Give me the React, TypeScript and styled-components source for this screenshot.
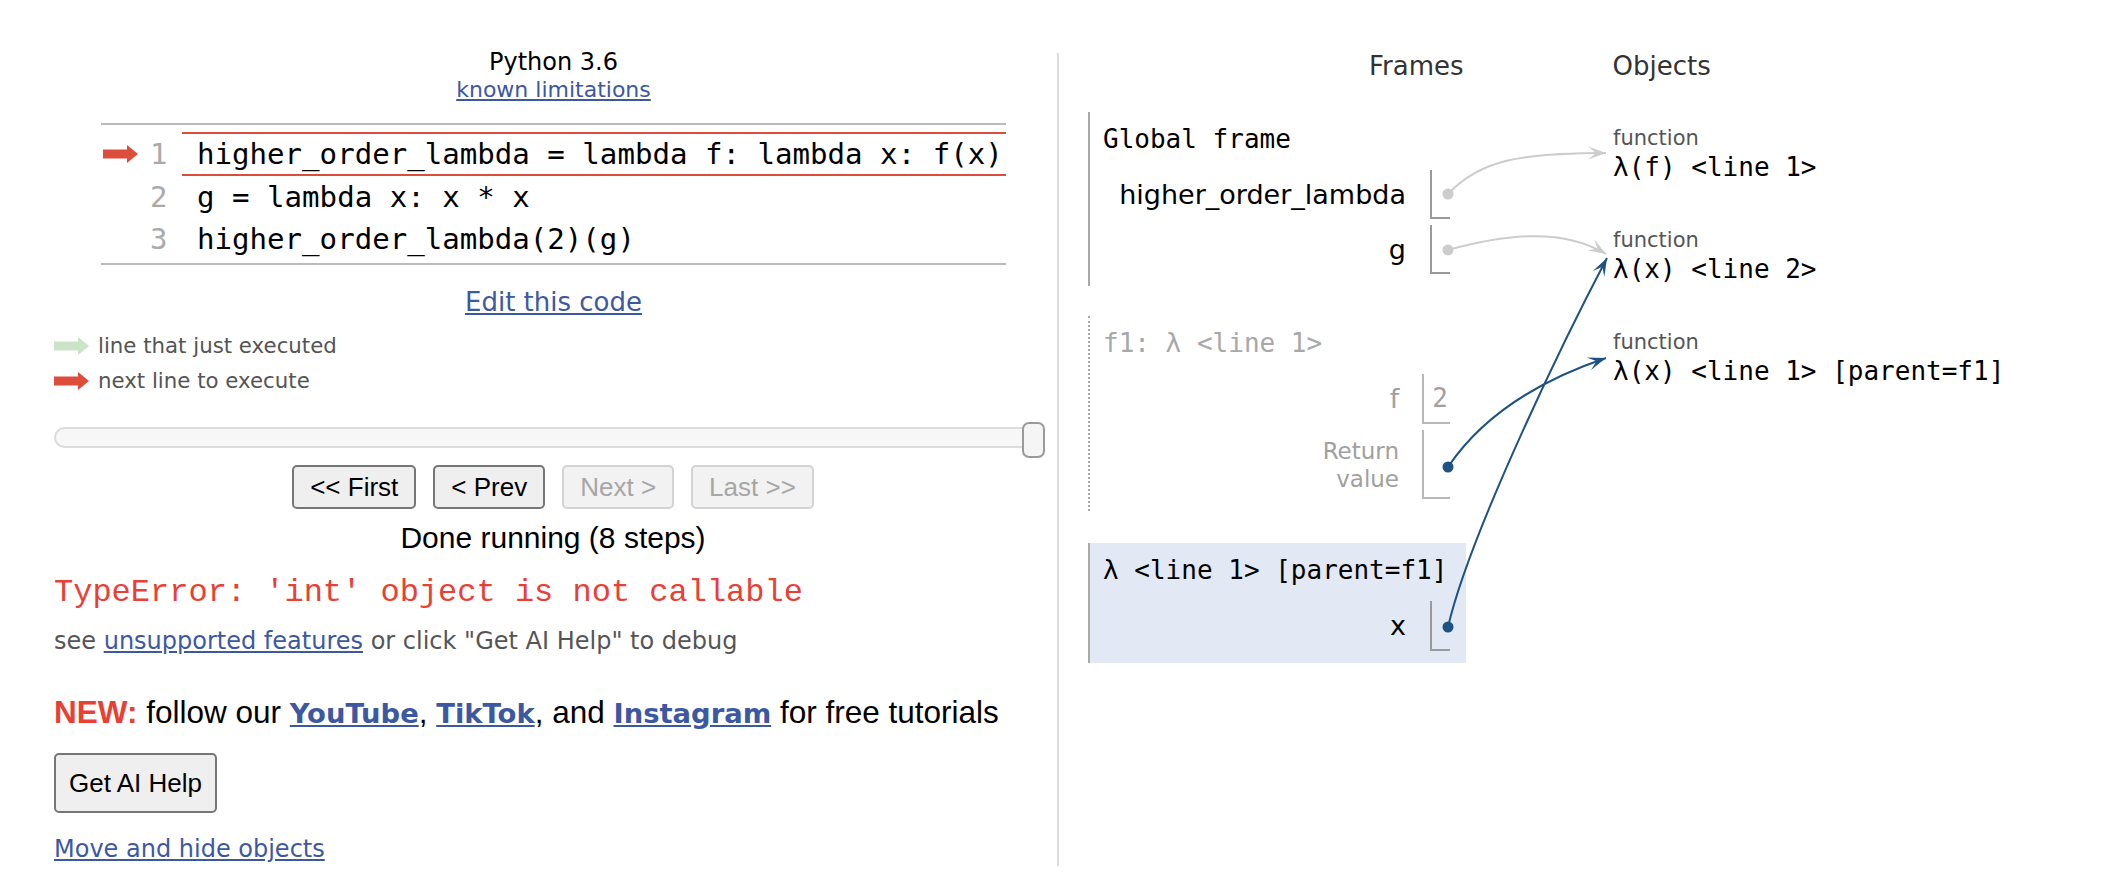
import React from "react";
import styled, { createGlobalStyle, css } from "styled-components";

const SANS = `"DejaVu Sans", Verdana, sans-serif`;
const ARIAL = `"Liberation Sans", Arial, Helvetica, sans-serif`;
const MONO = `"DejaVu Sans Mono", Menlo, monospace`;
const COURIER = `"Liberation Mono", "Courier New", monospace`;
const LINK = "#3d58a2";
const RED = "#dc4d3c";
const ERR = "#e93f34";

const GlobalStyle = createGlobalStyle`
  html, body { margin: 0; padding: 0; background: #ffffff; }
  body { font-family: ${SANS}; color: #000; }
  * { box-sizing: border-box; }
`;

const Page = styled.div`
  position: relative;
  display: flex;
  align-items: flex-start;
  width: 2108px;
  height: 884px;
  overflow: hidden;
`;

/* ---------- left pane ---------- */
const LeftPane = styled.div`
  flex: none;
  width: 1057px;
  padding: 48px 10px 0 54px;
  display: flex;
  flex-direction: column;
  align-items: flex-start;
`;

const CodeColumn = styled.div`
  margin-left: 47px;
  width: 905px;
  display: flex;
  flex-direction: column;
  align-items: center;
`;

const LangLabel = styled.div`
  font-family: ${SANS};
  font-size: 24px;
  line-height: 28px;
  color: #000;
`;

const TopLink = styled.a`
  font-family: ${SANS};
  font-size: 22px;
  line-height: 28px;
  color: ${LINK};
  text-decoration: underline;
`;

const CodeTable = styled.div`
  width: 100%;
  margin-top: 19px;
  border-top: 2px solid #bbbbbb;
  border-bottom: 2px solid #bbbbbb;
  padding: 7px 0 3px;
  display: flex;
  flex-direction: column;
`;

const CodeRow = styled.div`
  display: flex;
  align-items: center;
`;

const Gutter = styled.div`
  width: 44px;
  flex: none;
  display: flex;
  align-items: center;
  padding-left: 2px;
  height: 18px;
`;

const LineNo = styled.div<{ $current?: boolean }>`
  width: 37px;
  flex: none;
  padding-left: 5px;
  font-family: ${MONO};
  font-size: 29px;
  line-height: ${(p) => (p.$current ? 40 : 42)}px;
  color: #aaaaaa;
`;

const CodeCell = styled.div<{ $current?: boolean }>`
  flex: 1;
  padding-left: 15px;
  font-family: ${MONO};
  font-size: 29.1px;
  line-height: 42px;
  white-space: pre;
  color: #000;
  ${(p) =>
    p.$current &&
    css`
      line-height: 40px;
      border-top: 2px solid ${RED};
      border-bottom: 2px solid ${RED};
    `}
`;

const EditLink = styled.a`
  margin-top: 21px;
  font-family: ${SANS};
  font-size: 26px;
  line-height: 32px;
  color: ${LINK};
  text-decoration: underline;
`;

const Legend = styled.div`
  margin-top: 10px;
  display: flex;
  flex-direction: column;
`;

const LegendRow = styled.div`
  display: flex;
  align-items: center;
  gap: 8px;
  height: 35px;
  font-family: ${SANS};
  font-size: 21.3px;
  color: #555555;
`;

const Slider = styled.div`
  position: relative;
  width: 991px;
  height: 36px;
  margin-top: 24px;
`;

const Track = styled.div`
  margin-top: 5px;
  width: 984px;
  height: 21px;
  border: 2px solid #dcdcdc;
  border-radius: 11px;
  background: #f7f7f7;
`;

const Handle = styled.div`
  position: absolute;
  right: 0;
  top: 0;
  width: 23px;
  height: 36px;
  border: 2px solid #9a9a9a;
  border-radius: 7px;
  background: #f5f5f5;
`;

const NavRow = styled.div`
  align-self: stretch;
  display: flex;
  justify-content: center;
  gap: 17px;
  margin-top: 7px;
  padding-left: 5px;
`;

const NavButton = styled.button`
  font-family: ${ARIAL};
  font-size: 26px;
  line-height: 30px;
  padding: 5px 16px;
  border: 2px solid #767676;
  border-radius: 5px;
  background: #efefef;
  color: #000;
  &:disabled {
    border-color: #d3d3d3;
    background: #f2f2f2;
    color: #a6a6a6;
  }
`;

const StatusText = styled.div`
  align-self: stretch;
  text-align: center;
  padding-left: 5px;
  margin-top: 12px;
  font-family: ${ARIAL};
  font-size: 30px;
  line-height: 34px;
  color: #000;
`;

const ErrorText = styled.div`
  margin-top: 20px;
  font-family: ${COURIER};
  font-size: 32px;
  line-height: 36px;
  color: ${ERR};
  white-space: pre;
`;

const HintText = styled.div`
  margin-top: 15px;
  font-family: ${SANS};
  font-size: 24px;
  line-height: 30px;
  color: #555555;
  a {
    color: ${LINK};
    text-decoration: underline;
  }
`;

const NewsText = styled.div`
  margin-top: 38px;
  font-family: ${ARIAL};
  font-size: 31.5px;
  line-height: 36px;
  color: #000;
  white-space: nowrap;
`;

const NewTag = styled.span`
  color: ${ERR};
  font-weight: bold;
`;

const SocialLink = styled.a`
  font-family: ${SANS};
  font-size: 27.4px;
  font-weight: bold;
  color: ${LINK};
  text-decoration: underline;
`;

const HelpButton = styled.button`
  margin-top: 21px;
  font-family: ${ARIAL};
  font-size: 26px;
  line-height: 30px;
  padding: 13px 13px;
  border: 2px solid #767676;
  border-radius: 5px;
  background: #efefef;
  color: #000;
`;

const MoveLink = styled.a`
  margin-top: 21px;
  font-family: ${SANS};
  font-size: 24px;
  line-height: 30px;
  color: ${LINK};
  text-decoration: underline;
`;

/* ---------- right pane ---------- */
const Divider = styled.div`
  flex: none;
  width: 2px;
  height: 813px;
  margin-top: 53px;
  background: #dcdcdc;
`;

const RightPane = styled.div`
  flex: 1;
  padding-top: 51px;
  display: flex;
  flex-direction: column;
`;

const HeaderRow = styled.div`
  display: flex;
  font-family: ${SANS};
  font-size: 26px;
  line-height: 30px;
  color: #333333;
`;

const HeadCell = styled.div<{ $offset: number }>`
  margin-left: ${(p) => p.$offset}px;
`;

const Columns = styled.div`
  display: flex;
  align-items: flex-start;
  margin-top: 31px;
`;

const FramesColumn = styled.div`
  margin-left: 29px;
  width: 378px;
  display: flex;
  flex-direction: column;
`;

type FrameKind = "normal" | "zombie" | "active";

const Frame = styled.div<{ $kind: FrameKind; $space?: number }>`
  margin-top: ${(p) => p.$space ?? 0}px;
  padding: 12px 16px 12px 13px;
  border-left: 2px ${(p) => (p.$kind === "zombie" ? "dotted #aaaaaa" : "solid #a9a9a9")};
  background: ${(p) => (p.$kind === "active" ? "#e3e9f4" : "transparent")};
`;

const FrameTitle = styled.div<{ $muted?: boolean }>`
  font-family: ${MONO};
  font-size: 26px;
  line-height: 30px;
  white-space: pre;
  color: ${(p) => (p.$muted ? "#a8a8a8" : "#000")};
`;

const VarList = styled.div`
  margin-top: 16px;
  display: flex;
  flex-direction: column;
  align-items: flex-end;
  gap: 6px;
`;

const VarRow = styled.div`
  display: flex;
  align-items: stretch;
`;

const VarName = styled.div<{ $muted?: boolean; $small?: boolean; $gap: number }>`
  display: flex;
  flex-direction: column;
  justify-content: center;
  align-items: flex-end;
  text-align: right;
  padding-right: ${(p) => p.$gap}px;
  font-family: ${SANS};
  font-size: ${(p) => (p.$small ? 23 : 27)}px;
  line-height: 28px;
  color: ${(p) => (p.$muted ? "#a0a0a0" : "#000")};
`;

const ValueCell = styled.div<{ $muted?: boolean; $h: number; $w?: number }>`
  min-width: ${(p) => p.$w ?? 20}px;
  height: ${(p) => p.$h}px;
  border-left: 2px solid ${(p) => (p.$muted ? "#b8b8b8" : "#9a9a9a")};
  border-bottom: 2px solid ${(p) => (p.$muted ? "#b8b8b8" : "#9a9a9a")};
  display: flex;
  align-items: center;
`;

const PrimValue = styled.span`
  padding: 0 2px 0 8px;
  font-family: ${MONO};
  font-size: 26px;
  line-height: 30px;
  color: #a0a0a0;
`;

const ObjectsColumn = styled.div`
  margin-left: 147px;
  margin-top: 13px;
  display: flex;
  flex-direction: column;
  gap: 45px;
`;

const ObjBlock = styled.div`
  display: flex;
  flex-direction: column;
`;

const ObjLabel = styled.div`
  font-family: ${SANS};
  font-size: 21px;
  line-height: 26px;
  color: #555555;
`;

const ObjValue = styled.div`
  margin-top: 1px;
  font-family: ${MONO};
  font-size: 26px;
  line-height: 30px;
  white-space: pre;
  color: #000;
`;

const ArrowLayer = styled.svg`
  position: absolute;
  left: 0;
  top: 0;
  width: 2108px;
  height: 884px;
  pointer-events: none;
  overflow: visible;
`;

/* ---------- drawings ---------- */
const ExecArrow: React.FC<{ color: string }> = ({ color }) => (
  <svg width="36" height="18" viewBox="0 0 36 18">
    <path d="M0 4.5H24V0L35 9L24 18V13.5H0Z" fill={color} />
  </svg>
);

type Pt = [number, number];
type Conn = { from: Pt; c1: Pt; c2: Pt; to: Pt; color: string };

const GRAY = "#cccccc";
const BLUE = "#1e5282";

const connections: Conn[] = [
  { from: [1448, 194], c1: [1480, 160], c2: [1520, 153], to: [1606, 153], color: GRAY },
  { from: [1448, 250], c1: [1500, 236], c2: [1560, 226], to: [1606, 254], color: GRAY },
  { from: [1448, 467], c1: [1475, 427], c2: [1520, 387], to: [1606, 358], color: BLUE },
  { from: [1448, 627], c1: [1470, 532], c2: [1568, 332], to: [1607, 258], color: BLUE },
];

function arrowHead(c: Conn): string {
  const [tx, ty] = c.to;
  const dx = tx - c.c2[0];
  const dy = ty - c.c2[1];
  const len = Math.hypot(dx, dy) || 1;
  const ux = dx / len;
  const uy = dy / len;
  const nx = -uy;
  const ny = ux;
  const L = 18;
  const W = 13;
  const fold = 0.55;
  const bx = tx - L * ux;
  const by = ty - L * uy;
  const lx = bx + (W / 2) * nx;
  const ly = by + (W / 2) * ny;
  const rx = bx - (W / 2) * nx;
  const ry = by - (W / 2) * ny;
  const kx = tx - L * fold * ux;
  const ky = ty - L * fold * uy;
  return `${tx},${ty} ${lx},${ly} ${kx},${ky} ${rx},${ry}`;
}

const Connectors: React.FC = () => (
  <ArrowLayer viewBox="0 0 2108 884">
    {connections.map((c, i) => (
      <g key={i}>
        <path
          d={`M${c.from[0]},${c.from[1]} C${c.c1[0]},${c.c1[1]} ${c.c2[0]},${c.c2[1]} ${c.to[0]},${c.to[1]}`}
          fill="none"
          stroke={c.color}
          strokeWidth={2}
        />
        <polygon points={arrowHead(c)} fill={c.color} />
        <circle cx={c.from[0]} cy={c.from[1]} r={5.5} fill={c.color} />
      </g>
    ))}
  </ArrowLayer>
);

/* ---------- data ---------- */
const codeLines = [
  "higher_order_lambda = lambda f: lambda x: f(x)",
  "g = lambda x: x * x",
  "higher_order_lambda(2)(g)",
];

const objects = [
  { label: "function", value: "λ(f) <line 1>" },
  { label: "function", value: "λ(x) <line 2>" },
  { label: "function", value: "λ(x) <line 1> [parent=f1]" },
];

export default function App() {
  return (
    <>
      <GlobalStyle />
      <Page>
        <LeftPane>
          <CodeColumn>
            <LangLabel>Python 3.6</LangLabel>
            <TopLink href="#">known limitations</TopLink>
            <CodeTable>
              {codeLines.map((line, i) => (
                <CodeRow key={i}>
                  <Gutter>{i === 0 && <ExecArrow color={RED} />}</Gutter>
                  <LineNo $current={i === 0}>{i + 1}</LineNo>
                  <CodeCell $current={i === 0}>{line}</CodeCell>
                </CodeRow>
              ))}
            </CodeTable>
            <EditLink href="#">Edit this code</EditLink>
          </CodeColumn>

          <Legend>
            <LegendRow>
              <ExecArrow color="#cbe3c7" />
              <span>line that just executed</span>
            </LegendRow>
            <LegendRow>
              <ExecArrow color={RED} />
              <span>next line to execute</span>
            </LegendRow>
          </Legend>

          <Slider>
            <Track />
            <Handle />
          </Slider>

          <NavRow>
            <NavButton>&lt;&lt; First</NavButton>
            <NavButton>&lt; Prev</NavButton>
            <NavButton disabled>Next &gt;</NavButton>
            <NavButton disabled>Last &gt;&gt;</NavButton>
          </NavRow>

          <StatusText>Done running (8 steps)</StatusText>

          <ErrorText>TypeError: 'int' object is not callable</ErrorText>

          <HintText>
            see <a href="#">unsupported features</a> or click "Get AI Help" to debug
          </HintText>

          <NewsText>
            <NewTag>NEW:</NewTag> follow our <SocialLink href="#">YouTube</SocialLink>,{" "}
            <SocialLink href="#">TikTok</SocialLink>, and{" "}
            <SocialLink href="#">Instagram</SocialLink> for free tutorials
          </NewsText>

          <HelpButton>Get AI Help</HelpButton>

          <MoveLink href="#">Move and hide objects</MoveLink>
        </LeftPane>

        <Divider />

        <RightPane>
          <HeaderRow>
            <HeadCell $offset={310}>Frames</HeadCell>
            <HeadCell $offset={149}>Objects</HeadCell>
          </HeaderRow>
          <Columns>
            <FramesColumn>
              <Frame $kind="normal">
                <FrameTitle>Global frame</FrameTitle>
                <VarList>
                  <VarRow>
                    <VarName $gap={24}>higher_order_lambda</VarName>
                    <ValueCell $h={49} />
                  </VarRow>
                  <VarRow>
                    <VarName $gap={24}>g</VarName>
                    <ValueCell $h={49} />
                  </VarRow>
                </VarList>
              </Frame>

              <Frame $kind="zombie" $space={30}>
                <FrameTitle $muted>f1: λ &lt;line 1&gt;</FrameTitle>
                <VarList>
                  <VarRow>
                    <VarName $muted $gap={23}>f</VarName>
                    <ValueCell $muted $h={50}>
                      <PrimValue>2</PrimValue>
                    </ValueCell>
                  </VarRow>
                  <VarRow>
                    <VarName $muted $small $gap={23}>
                      <span>Return</span>
                      <span>value</span>
                    </VarName>
                    <ValueCell $muted $h={69} $w={28} />
                  </VarRow>
                </VarList>
              </Frame>

              <Frame $kind="active" $space={32}>
                <FrameTitle>λ &lt;line 1&gt; [parent=f1]</FrameTitle>
                <VarList>
                  <VarRow>
                    <VarName $gap={24}>x</VarName>
                    <ValueCell $h={50} />
                  </VarRow>
                </VarList>
              </Frame>
            </FramesColumn>

            <ObjectsColumn>
              {objects.map((o, i) => (
                <ObjBlock key={i}>
                  <ObjLabel>{o.label}</ObjLabel>
                  <ObjValue>{o.value}</ObjValue>
                </ObjBlock>
              ))}
            </ObjectsColumn>
          </Columns>
        </RightPane>

        <Connectors />
      </Page>
    </>
  );
}
